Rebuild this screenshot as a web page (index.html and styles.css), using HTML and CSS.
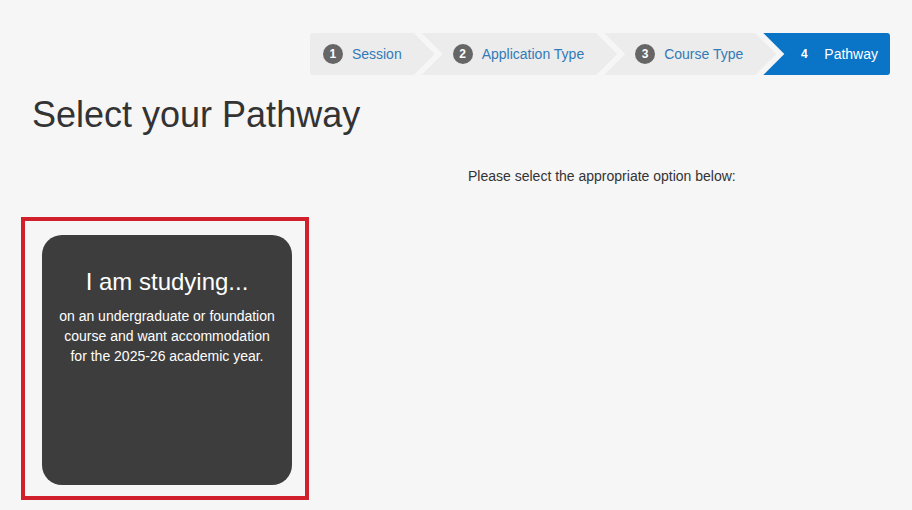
FILE: index.html
```html
<!DOCTYPE html>
<html lang="en">
<head>
<meta charset="utf-8">
<title>Select your Pathway</title>
<link rel="stylesheet" href="styles.css">
</head>
<body>
<div class="page">
  <nav class="steps-bar">
    <ol class="steps">
      <li class="step step-first"><span class="badge">1</span><span class="label">Session</span></li>
      <li class="step step-mid"><span class="badge">2</span><span class="label">Application Type</span></li>
      <li class="step step-mid"><span class="badge">3</span><span class="label">Course Type</span></li>
      <li class="step step-last active"><span class="badge">4</span><span class="label">Pathway</span></li>
    </ol>
  </nav>
  <h1 class="title">Select your Pathway</h1>
  <p class="intro">Please select the appropriate option below:</p>
  <div class="options">
    <div class="option-frame">
      <div class="card">
        <h3 class="card-title">I am studying...</h3>
        <p class="card-text">on an undergraduate or foundation course and want accommodation for the 2025-26 academic year.</p>
      </div>
    </div>
  </div>
</div>
</body>
</html>
```

FILE: styles.css
```css
html, body {
  margin: 0;
  padding: 0;
  background: #f6f6f6;
  font-family: "Liberation Sans", Arial, sans-serif;
  color: #333;
}

.page {
  display: flex;
  flex-direction: column;
  padding-top: 33px;
}

.steps-bar {
  display: flex;
  justify-content: flex-end;
  padding-right: 22px;
}

.steps {
  display: flex;
  list-style: none;
  margin: 0;
  padding: 0;
}

.step {
  display: flex;
  align-items: center;
  height: 42px;
  background: #ececec;
  font-size: 14px;
  color: #337ab7;
  box-sizing: border-box;
}

.step + .step {
  margin-left: -13px;
}

.step-first {
  padding: 0 33px 0 13px;
  border-radius: 3px 0 0 3px;
  clip-path: polygon(0 0, calc(100% - 21px) 0, 100% 50%, calc(100% - 21px) 100%, 0 100%);
}

.step-mid {
  padding: 0 33px 0 31px;
  clip-path: polygon(0 0, calc(100% - 21px) 0, 100% 50%, calc(100% - 21px) 100%, 0 100%, 21px 50%);
}

.step-last {
  padding: 0 12px 0 31px;
  border-radius: 0 3px 3px 0;
  clip-path: polygon(0 0, 100% 0, 100% 100%, 0 100%, 21px 50%);
}

.badge {
  display: flex;
  align-items: center;
  justify-content: center;
  width: 20px;
  height: 20px;
  border-radius: 50%;
  background: #666;
  color: #fff;
  font-size: 12px;
  font-weight: bold;
  margin-right: 9px;
}

.active {
  background: #0a74c6;
  color: #fff;
}

.active .badge {
  background: transparent;
  margin-right: 10px;
}

.title {
  margin: 20px 0 0 32px;
  font-size: 36px;
  font-weight: normal;
  line-height: 1.1;
  color: #333;
}

.intro {
  margin: 31px 0 0 0;
  padding-left: 468px;
  font-size: 14px;
  line-height: 20px;
  color: #333;
}

.options {
  display: flex;
  margin-top: 31px;
  padding-left: 21px;
}

.option-frame {
  border: 4px solid #d1202b;
  padding: 14px 13px 11px 17px;
}

.card {
  width: 250px;
  height: 250px;
  box-sizing: border-box;
  background: #3d3d3d;
  border-radius: 20px;
  color: #fff;
  text-align: center;
  padding: 34px 16px 0;
}

.card-title {
  margin: 0;
  font-size: 24px;
  font-weight: normal;
  line-height: 1.1;
}

.card-text {
  margin: 11px 0 0;
  font-size: 14px;
  line-height: 20px;
}
```
